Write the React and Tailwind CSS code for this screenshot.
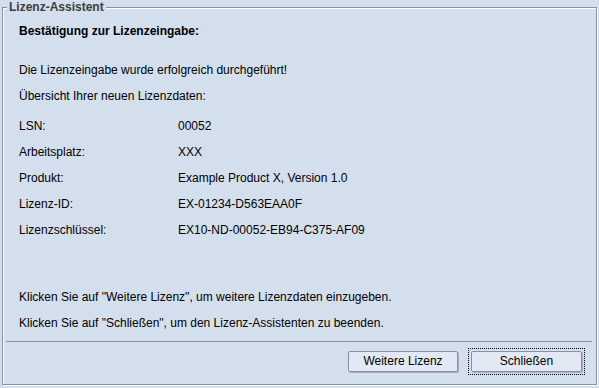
export default function App() {
  const rows = [
    ['LSN:', '00052'],
    ['Arbeitsplatz:', 'XXX'],
    ['Produkt:', 'Example Product X, Version 1.0'],
    ['Lizenz-ID:', 'EX-01234-D563EAA0F'],
    ['Lizenzschlüssel:', 'EX10-ND-00052-EB94-C375-AF09'],
  ]

  return (
    <div className="w-[599px] h-[388px] bg-[#d4dfee] pt-[7px] pl-[2px] text-[12px] text-black overflow-hidden"
      style={{ fontFamily: '"Liberation Sans", Arial, sans-serif' }}>
      {/* Etched frame */}
      <div className="relative w-[595px] h-[378px] border border-[#8a909b] shadow-[1px_1px_0_#ffffff,inset_1px_1px_0_#ffffff] flex flex-col">
        <div className="absolute left-[4px] top-[-8px] px-[2px] bg-[#d4dfee] font-bold text-[#3d3d3d] leading-[15px]">
          Lizenz-Assistent
        </div>

        <div className="flex flex-col pl-[16px] pt-[16px]">
          <div className="h-[14px] leading-[14px] font-bold">Bestätigung zur Lizenzeingabe:</div>
          <div className="mt-[25px] h-[14px] leading-[14px]">Die Lizenzeingabe wurde erfolgreich durchgeführt!</div>
          <div className="mt-[12px] h-[14px] leading-[14px]">Übersicht Ihrer neuen Lizenzdaten:</div>

          <div className="mt-[16px] flex flex-col">
            {rows.map(([label, value]) => (
              <div key={label} className="flex h-[26px] leading-[14px]">
                <span className="w-[159px]">{label}</span>
                <span>{value}</span>
              </div>
            ))}
          </div>

          <div className="mt-[41px] h-[14px] leading-[14px]">Klicken Sie auf "Weitere Lizenz", um weitere Lizenzdaten einzugeben.</div>
          <div className="mt-[12px] h-[14px] leading-[14px]">Klicken Sie auf "Schließen", um den Lizenz-Assistenten zu beenden.</div>
        </div>

        {/* Separator */}
        <div className="mt-[11px] ml-[3px] mr-[4px] h-px bg-[#8a909b]" />

        {/* Buttons */}
        <div className="mt-[6px] flex items-center justify-end gap-[10px] pr-[11px]">
          <button className="w-[110px] h-[21px] rounded-[2px] border border-[#8a919e] bg-[#e3e9f4] shadow-[1px_1px_0_#a7afbd] leading-[19px]">
            Weitere Lizenz
          </button>
          <div className="border border-dotted border-black p-[2px]">
            <button className="w-[111px] h-[21px] rounded-[2px] border border-[#8a919e] bg-[#e3e9f4] shadow-[1px_1px_0_#a7afbd] leading-[19px]">
              Schließen
            </button>
          </div>
        </div>
      </div>
    </div>
  )
}
